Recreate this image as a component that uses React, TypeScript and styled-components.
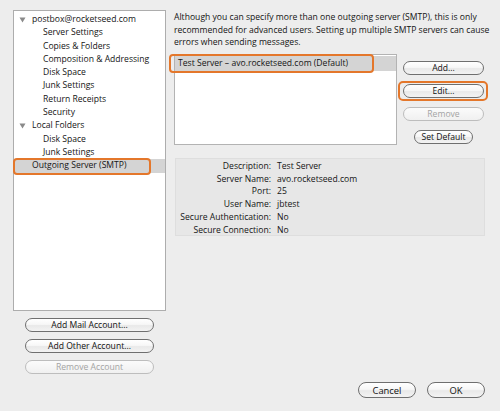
import React from "react";
import styled, { createGlobalStyle, css } from "styled-components";

const Global = createGlobalStyle`
  html, body { margin: 0; padding: 0; }
  body { background: #ededed; font-family: "Open Sans", "Liberation Sans", sans-serif; }
`;

const ORANGE = "#e4772b";

const Window = styled.div`
  width: 500px;
  height: 411px;
  box-sizing: border-box;
  padding: 10px 14px 0 13px;
  background: #ededed;
  display: flex;
  flex-direction: column;
  font-size: 8.6px;
  color: #141414;
`;

const Main = styled.div`
  display: flex;
  gap: 8px;
`;

const LeftColumn = styled.div`
  width: 153px;
  display: flex;
  flex-direction: column;
  align-items: center;
`;

const Tree = styled.div`
  width: 153px;
  height: 301px;
  box-sizing: border-box;
  border: 1px solid #adadad;
  background: #fff;
  padding-top: 2px;
  display: flex;
  flex-direction: column;
`;

const TreeRow = styled.div<{ $level: number; $selected?: boolean }>`
  position: relative;
  height: 13.3px;
  line-height: 13.3px;
  display: flex;
  align-items: center;
  padding-left: ${(p) => (p.$level === 0 ? 18 : 29)}px;
  background: ${(p) => (p.$selected ? "#d4d4d4" : "transparent")};
  white-space: nowrap;
`;

const Expander = styled.svg`
  position: absolute;
  left: 5px;
  top: 4px;
`;

const Callout = styled.span<{ $t: number; $r: number; $b: number; $l: number; $radius?: number }>`
  position: absolute;
  top: ${(p) => p.$t}px;
  right: ${(p) => p.$r}px;
  bottom: ${(p) => p.$b}px;
  left: ${(p) => p.$l}px;
  border: 2px solid ${ORANGE};
  border-radius: ${(p) => p.$radius ?? 4}px;
  pointer-events: none;
`;

const AccountButtons = styled.div`
  margin-top: 7px;
  width: 129px;
  display: flex;
  flex-direction: column;
  gap: 7px;
`;

const AquaButton = styled.button<{ $size?: "small" | "regular"; $disabled?: boolean }>`
  box-sizing: border-box;
  font-family: "Open Sans", "Liberation Sans", sans-serif;
  font-size: 8.6px;
  padding: 0 6px;
  margin: 0;
  background: linear-gradient(#ffffff 0%, #f7f7f7 45%, #e9e9e9 55%, #f3f3f3 100%);
  display: flex;
  align-items: center;
  justify-content: center;
  white-space: nowrap;
  ${(p) =>
    p.$size === "regular"
      ? css`
          height: 16px;
          width: 58px;
          font-size: 9.4px;
          border-radius: 8px;
        `
      : css`
          height: 14px;
          border-radius: 7px;
        `}
  ${(p) =>
    p.$disabled
      ? css`
          border: 1px solid #bdbdbd;
          color: #a3a3a3;
          background: linear-gradient(#fbfbfb, #f0f0f0);
        `
      : css`
          border: 1px solid #6f6f6f;
          color: #111;
        `}
`;

const FullButton = styled(AquaButton)`
  width: 100%;
`;

const RightColumn = styled.div`
  width: 312px;
  display: flex;
  flex-direction: column;
`;

const Intro = styled.p`
  margin: 1px 0 0 0;
  line-height: 12.5px;
  width: 318px;
`;

const ServerArea = styled.div`
  margin-top: 5px;
  display: flex;
  align-items: flex-start;
`;

const ServerList = styled.div`
  position: relative;
  width: 223px;
  height: 91px;
  box-sizing: border-box;
  border: 1px solid #b3b3b3;
  background: #fff;
  padding-top: 1px;
`;

const ServerRow = styled.div<{ $selected?: boolean }>`
  position: relative;
  height: 15px;
  line-height: 15px;
  padding-left: 3px;
  background: ${(p) => (p.$selected ? "#d4d4d4" : "transparent")};
  white-space: nowrap;
`;

const ServerButtons = styled.div`
  margin-left: 6px;
  margin-top: 7px;
  width: 81px;
  display: flex;
  flex-direction: column;
  align-items: center;
  gap: 9px;
`;

const ButtonSlot = styled.div`
  position: relative;
  width: 100%;
`;

const Details = styled.div`
  margin-top: 13px;
  margin-left: 1px;
  width: 310px;
  height: 78px;
  box-sizing: border-box;
  background: #e7e7e7;
  border: 1px solid #dedede;
  padding-top: 1px;
  display: grid;
  grid-template-columns: 95px 1fr;
  grid-auto-rows: 12.8px;
  column-gap: 6px;
  align-items: center;
`;

const DetailLabel = styled.span`
  text-align: right;
  white-space: nowrap;
`;

const DetailValue = styled.span`
  white-space: nowrap;
`;

const Footer = styled.div`
  margin-top: 8px;
  display: flex;
  justify-content: flex-end;
  gap: 11px;
  padding-right: 1px;
`;

const Triangle = () => (
  <Expander width="7" height="6" viewBox="0 0 7 6">
    <path d="M0.5 0.5 L6.5 0.5 L3.5 5.5 Z" fill="#8a8a8a" />
  </Expander>
);

const treeItems: { label: string; level: number; expander?: boolean; selected?: boolean }[] = [
  { label: "postbox@rocketseed.com", level: 0, expander: true },
  { label: "Server Settings", level: 1 },
  { label: "Copies & Folders", level: 1 },
  { label: "Composition & Addressing", level: 1 },
  { label: "Disk Space", level: 1 },
  { label: "Junk Settings", level: 1 },
  { label: "Return Receipts", level: 1 },
  { label: "Security", level: 1 },
  { label: "Local Folders", level: 0, expander: true },
  { label: "Disk Space", level: 1 },
  { label: "Junk Settings", level: 1 },
  { label: "Outgoing Server (SMTP)", level: 0, selected: true },
];

const details: [string, string][] = [
  ["Description:", "Test Server"],
  ["Server Name:", "avo.rocketseed.com"],
  ["Port:", "25"],
  ["User Name:", "jbtest"],
  ["Secure Authentication:", "No"],
  ["Secure Connection:", "No"],
];

export default function App() {
  return (
    <>
      <Global />
      <Window>
        <Main>
          <LeftColumn>
            <Tree>
              {treeItems.map((item, i) => (
                <TreeRow key={i} $level={item.level} $selected={item.selected}>
                  {item.expander && <Triangle />}
                  {item.label}
                  {item.selected && <Callout $t={-1} $r={14} $b={-2} $l={-1} />}
                </TreeRow>
              ))}
            </Tree>
            <AccountButtons>
              <FullButton>Add Mail Account...</FullButton>
              <FullButton>Add Other Account...</FullButton>
              <FullButton $disabled>Remove Account</FullButton>
            </AccountButtons>
          </LeftColumn>
          <RightColumn>
            <Intro>
              Although you can specify more than one outgoing server (SMTP), this is only
              recommended for advanced users. Setting up multiple SMTP servers can cause
              errors when sending messages.
            </Intro>
            <ServerArea>
              <ServerList>
                <ServerRow $selected>
                  Test Server – avo.rocketseed.com (Default)
                  <Callout $t={-2} $r={22} $b={-2} $l={-6} />
                </ServerRow>
              </ServerList>
              <ServerButtons>
                <FullButton>Add...</FullButton>
                <ButtonSlot>
                  <FullButton>Edit...</FullButton>
                  <Callout $t={-3} $r={-4} $b={-3} $l={-5} $radius={5} />
                </ButtonSlot>
                <FullButton $disabled>Remove</FullButton>
                <AquaButton>Set Default</AquaButton>
              </ServerButtons>
            </ServerArea>
            <Details>
              {details.map(([k, v]) => (
                <React.Fragment key={k}>
                  <DetailLabel>{k}</DetailLabel>
                  <DetailValue>{v}</DetailValue>
                </React.Fragment>
              ))}
            </Details>
          </RightColumn>
        </Main>
        <Footer>
          <AquaButton $size="regular">Cancel</AquaButton>
          <AquaButton $size="regular">OK</AquaButton>
        </Footer>
      </Window>
    </>
  );
}
